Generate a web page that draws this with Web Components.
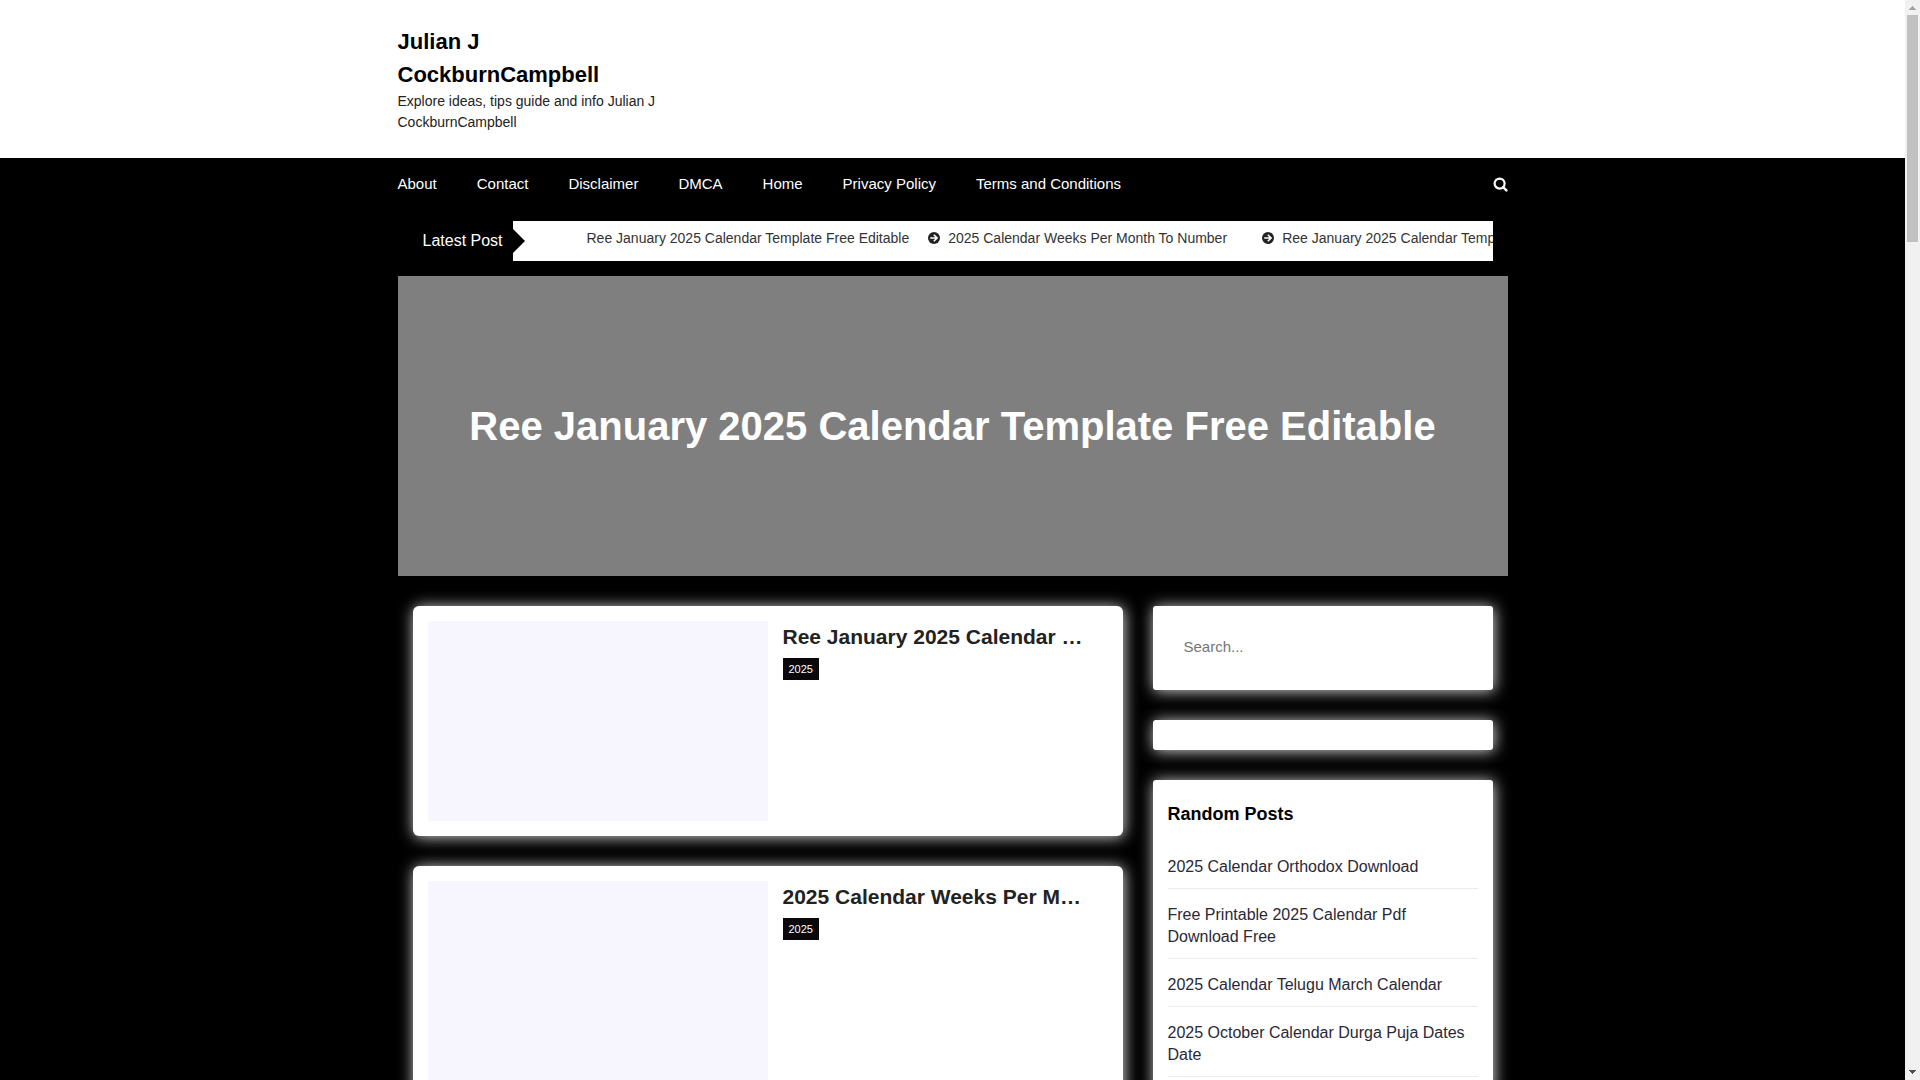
<!DOCTYPE html>
<html lang="en">
<head>
  <meta charset="utf-8">
  <meta name="viewport" content="width=device-width, initial-scale=1">
  <title>Julian J CockburnCampbell</title>
  <style>
    body {
      margin: 0;
      background: #000;
      color: #222;
      font-family: "Liberation Sans", Arial, sans-serif;
      --card-glow: 1px 1px 15px rgba(255, 255, 255, 0.85);
    }
  </style>
</head>
<body>
  <blog-shell>
    <site-header name="Julian J CockburnCampbell">
      Explore ideas, tips guide and info Julian J CockburnCampbell
    </site-header>
    <site-nav>
      <a href="#about">About</a>
      <a href="#contact">Contact</a>
      <a href="#disclaimer">Disclaimer</a>
      <a href="#dmca">DMCA</a>
      <a href="#home">Home</a>
      <a href="#privacy">Privacy Policy</a>
      <a href="#terms">Terms and Conditions</a>
    </site-nav>
    <news-ticker label="Latest Post">
      <ticker-item plain>Ree January 2025 Calendar Template Free Editable</ticker-item>
      <ticker-item>2025 Calendar Weeks Per Month To Number</ticker-item>
      <ticker-item>Ree January 2025 Calendar Template Free Editable</ticker-item>
    </news-ticker>
    <hero-banner>Ree January 2025 Calendar Template Free Editable</hero-banner>
    <content-columns>
      <post-card category="2025">Ree January 2025 Calendar Template Free Editable</post-card>
      <post-card category="2025">2025 Calendar Weeks Per Month To Number</post-card>
      <side-widget slot="side"><search-box></search-box></side-widget>
      <side-widget slot="side"></side-widget>
      <side-widget slot="side" heading="Random Posts">
        <post-link>2025 Calendar Orthodox Download</post-link>
        <post-link>Free Printable 2025 Calendar Pdf Download Free</post-link>
        <post-link>2025 Calendar Telugu March Calendar</post-link>
        <post-link>2025 October Calendar Durga Puja Dates Date</post-link>
      </side-widget>
    </content-columns>
  </blog-shell>

  <script>
    // Attaches an open shadow root filled with the given markup
    function render(host, html) {
      const template = document.createElement("template");
      template.innerHTML = html;
      host.attachShadow({ mode: "open" });
      host.shadowRoot.appendChild(template.content.cloneNode(true));
    }

    class BlogShell extends HTMLElement {
      constructor() {
        super();
        render(this, `
          <style>
            :host {
              display: flex;
              height: 100vh;
              overflow: hidden;
            }

            .page {
              flex: 1;
              min-width: 0;
              overflow: hidden;
            }
          </style>
          <div class="page"><slot></slot></div>
          <scroll-rail></scroll-rail>
        `);
      }
    }

    class ScrollRail extends HTMLElement {
      constructor() {
        super();
        render(this, `
          <style>
            :host {
              display: flex;
              flex-direction: column;
              flex: none;
              width: 15px;
              background: #f1f1f1;
            }

            svg {
              display: block;
              width: 15px;
              height: 15px;
            }

            .track {
              flex: 1;
              padding: 0 2px;
            }

            .thumb {
              height: 21.6%;
              background: #c1c1c1;
            }
          </style>
          <svg viewBox="0 0 15 15" shape-rendering="crispEdges" aria-hidden="true">
            <path d="M4 10h7V9h-1V8H9V7H8V6H7v1H6v1H5v1H4z" fill="#a3a3a3"/>
          </svg>
          <div class="track"><div class="thumb"></div></div>
          <svg viewBox="0 0 15 15" shape-rendering="crispEdges" aria-hidden="true">
            <path d="M4 5h7v1h-1v1H9v1H8v1H7V8H6V7H5V6H4z" fill="#505050"/>
          </svg>
        `);
      }
    }

    class SiteHeader extends HTMLElement {
      constructor() {
        super();
        render(this, `
          <style>
            :host {
              display: block;
              padding: 25px 15px;
              background: #fff;
            }

            .inner {
              max-width: 1110px;
              margin: 0 auto;
            }

            .brand {
              width: 25%;
            }

            h1, p {
              margin: 0;
            }

            h1 {
              font-size: 22px;
              line-height: 33px;
            }

            h1 a {
              color: #000;
              text-decoration: none;
            }

            p {
              font-size: 14px;
              line-height: 21px;
            }
          </style>
          <div class="inner">
            <div class="brand">
              <h1><a href="#home"></a></h1>
              <p><slot></slot></p>
            </div>
          </div>
        `);
      }

      connectedCallback() {
        this.shadowRoot.querySelector("h1 a").textContent = this.getAttribute("name");
      }
    }

    class SiteNav extends HTMLElement {
      constructor() {
        super();
        render(this, `
          <style>
            :host {
              display: block;
              padding: 15px;
              font-size: 15px;
              line-height: 22px;
            }

            .inner {
              display: flex;
              align-items: center;
              justify-content: space-between;
              max-width: 1110px;
              margin: 0 auto;
            }

            nav {
              display: flex;
              gap: 40px;
            }

            ::slotted(a) {
              color: #fff;
              text-decoration: none;
            }

            button {
              display: flex;
              padding: 0;
              border: none;
              background: none;
              color: #fff;
              cursor: pointer;
            }

            svg {
              width: 15px;
              height: 15px;
            }
          </style>
          <div class="inner">
            <nav><slot></slot></nav>
            <button type="button" aria-label="Search">
              <svg viewBox="0 0 15 15" fill="none" stroke="currentColor" stroke-width="2.2">
                <circle cx="6.6" cy="6.6" r="5"/>
                <path d="M10.2 10.2 13.4 13.4" stroke-linecap="round" stroke-width="2.4"/>
              </svg>
            </button>
          </div>
        `);
      }
    }

    class NewsTicker extends HTMLElement {
      constructor() {
        super();
        render(this, `
          <style>
            :host {
              display: block;
              padding: 11px 15px 15px;
            }

            .inner {
              display: flex;
              box-sizing: border-box;
              max-width: 1110px;
              margin: 0 auto;
              padding-right: 15px;
            }

            .label {
              flex: none;
              box-sizing: border-box;
              width: 115px;
              padding-left: 25px;
              color: #fff;
              font-size: 16px;
              line-height: 40px;
            }

            .strip {
              display: flex;
              flex: 1;
              min-width: 0;
              height: 40px;
              background: #fff;
              overflow: hidden;
            }

            .arrow {
              flex: none;
              align-self: center;
              border: 12px solid transparent;
              border-left-color: #000;
              border-right: none;
            }

            .items {
              display: flex;
              gap: 19px;
              margin-left: 62px;
            }
          </style>
          <div class="inner">
            <div class="label"></div>
            <div class="strip">
              <div class="arrow"></div>
              <div class="items"><slot></slot></div>
            </div>
          </div>
        `);
      }

      connectedCallback() {
        this.shadowRoot.querySelector(".label").textContent = this.getAttribute("label");
      }
    }

    class TickerItem extends HTMLElement {
      constructor() {
        super();
        render(this, `
          <style>
            :host {
              display: flex;
              align-items: center;
              flex: none;
              gap: 8px;
              min-width: 315px;
              height: 34px;
              font-size: 14px;
              white-space: nowrap;
            }

            svg {
              width: 12px;
              height: 12px;
            }

            :host([plain]) svg {
              display: none;
            }

            a {
              color: #333;
              text-decoration: none;
            }
          </style>
          <svg viewBox="0 0 12 12" aria-hidden="true">
            <circle cx="6" cy="6" r="6" fill="#222"/>
            <path d="M2.2 6h6.6M5.8 2.7 9.1 6 5.8 9.3" fill="none" stroke="#fff" stroke-width="1.6"/>
          </svg>
          <a href="#post"><slot></slot></a>
        `);
      }
    }

    class HeroBanner extends HTMLElement {
      constructor() {
        super();
        render(this, `
          <style>
            :host {
              display: block;
              padding: 0 15px;
            }

            .slide {
              display: flex;
              align-items: center;
              justify-content: center;
              max-width: 1110px;
              min-height: 300px;
              margin: 0 auto;
              background: #7f7f7f;
            }

            h2 {
              margin: 0;
              font-size: 40px;
              line-height: 48px;
              text-align: center;
            }

            a {
              color: #fff;
              text-decoration: none;
            }
          </style>
          <div class="slide"><h2><a href="#post"><slot></slot></a></h2></div>
        `);
      }
    }

    class ContentColumns extends HTMLElement {
      constructor() {
        super();
        render(this, `
          <style>
            :host {
              display: block;
              padding: 30px;
            }

            .inner {
              display: grid;
              grid-template-columns: minmax(0, 1fr) 340px;
              gap: 30px;
              max-width: 1080px;
              margin: 0 auto;
            }

            main, aside {
              display: flex;
              flex-direction: column;
              gap: 30px;
            }
          </style>
          <div class="inner">
            <main><slot></slot></main>
            <aside><slot name="side"></slot></aside>
          </div>
        `);
      }
    }

    class PostCard extends HTMLElement {
      constructor() {
        super();
        render(this, `
          <style>
            :host {
              display: block;
            }

            article {
              display: grid;
              grid-template-columns: repeat(2, minmax(0, 1fr));
              padding: 15px;
              border-radius: 6px;
              background: #fff;
              box-shadow: var(--card-glow);
            }

            .thumb {
              height: 200px;
              background: #f7f6ff;
            }

            .text {
              padding: 0 20px 0 15px;
            }

            h2 {
              margin: 0 0 5px;
              font-size: 21px;
              line-height: 32px;
              white-space: nowrap;
              overflow: hidden;
              text-overflow: ellipsis;
            }

            h2 a {
              color: #222;
              text-decoration: none;
            }

            .category {
              display: inline-block;
              padding: 0 6px;
              background: #0a080b;
              color: #fff;
              font-size: 11px;
              line-height: 22px;
              text-decoration: none;
              vertical-align: top;
            }
          </style>
          <article>
            <div class="thumb"></div>
            <div class="text">
              <h2><a href="#post"><slot></slot></a></h2>
              <a class="category" href="#category"></a>
            </div>
          </article>
        `);
      }

      connectedCallback() {
        this.shadowRoot.querySelector(".category").textContent = this.getAttribute("category");
      }
    }

    class SideWidget extends HTMLElement {
      constructor() {
        super();
        render(this, `
          <style>
            :host {
              display: block;
              padding: 15px;
              border-radius: 3px;
              background: #fff;
              box-shadow: var(--card-glow);
            }

            h2 {
              margin: 0;
              padding: 6px 0 13px;
              color: #000;
              font-size: 18px;
              line-height: 27px;
            }
          </style>
          <slot></slot>
        `);
      }

      connectedCallback() {
        if (this.hasAttribute("heading")) {
          const heading = document.createElement("h2");
          heading.textContent = this.getAttribute("heading");
          this.shadowRoot.querySelector("slot").before(heading);
        }
      }
    }

    class SearchBox extends HTMLElement {
      constructor() {
        super();
        render(this, `
          <style>
            :host {
              display: block;
            }

            form {
              display: flex;
              padding-bottom: 4px;
            }

            input {
              flex: 1;
              min-width: 0;
              height: 50px;
              padding: 0 16px;
              border: none;
              outline: none;
              background: none;
              font: 15px "Liberation Sans", Arial, sans-serif;
            }

            input::placeholder {
              color: #757575;
            }
          </style>
          <form><input type="search" placeholder="Search..." aria-label="Search"></form>
        `);
      }
    }

    class PostLink extends HTMLElement {
      constructor() {
        super();
        render(this, `
          <style>
            :host {
              display: block;
              padding: 15px 0 10px;
              border-bottom: 1px solid #ebebeb;
              font-size: 16px;
              line-height: 22px;
            }

            a {
              color: #2a2836;
              text-decoration: none;
            }
          </style>
          <a href="#post"><slot></slot></a>
        `);
      }
    }

    customElements.define("scroll-rail", ScrollRail);
    customElements.define("blog-shell", BlogShell);
    customElements.define("site-header", SiteHeader);
    customElements.define("site-nav", SiteNav);
    customElements.define("ticker-item", TickerItem);
    customElements.define("news-ticker", NewsTicker);
    customElements.define("hero-banner", HeroBanner);
    customElements.define("content-columns", ContentColumns);
    customElements.define("post-card", PostCard);
    customElements.define("side-widget", SideWidget);
    customElements.define("search-box", SearchBox);
    customElements.define("post-link", PostLink);
  </script>
</body>
</html>
